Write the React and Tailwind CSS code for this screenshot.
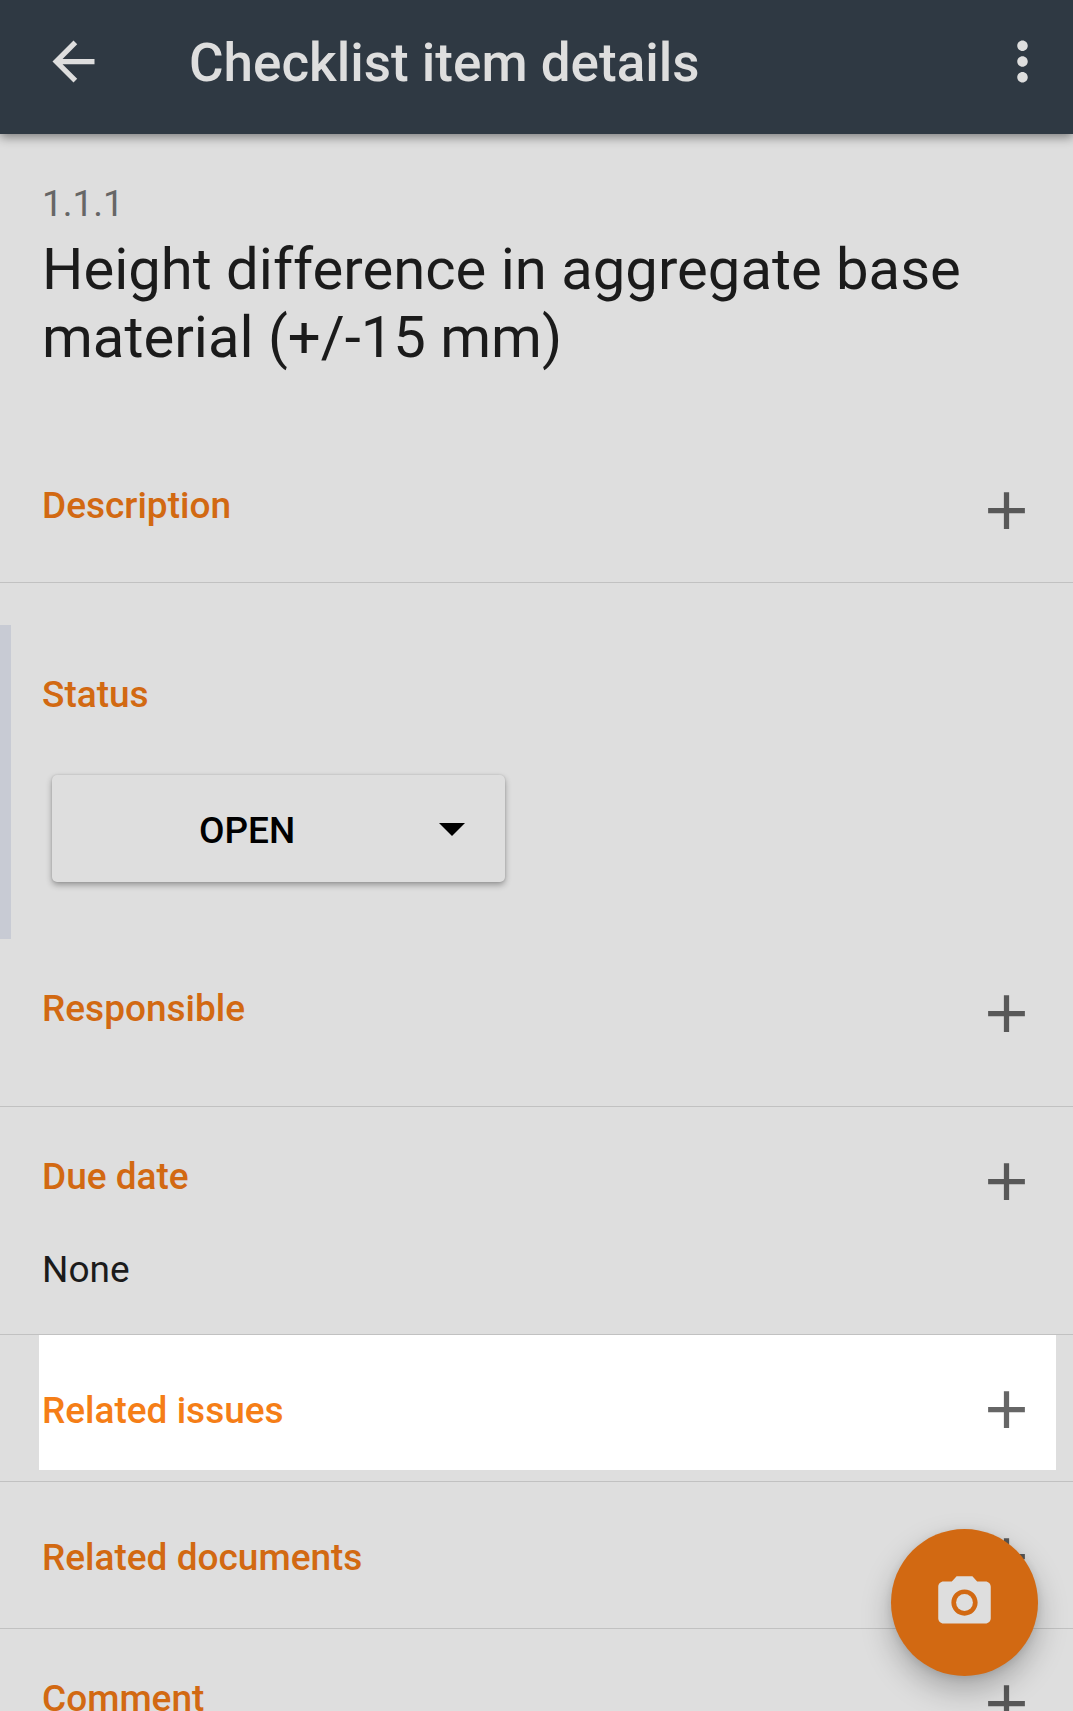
import { MdAdd, MdArrowBack, MdMoreVert, MdPhotoCamera } from "react-icons/md";

function SectionHeader({ title, low = false, bright = false }) {
  return (
    <div className="flex items-center justify-between">
      <h2
        className={`text-[37px] leading-[44px] font-medium ${low ? "pt-1" : "pb-2"} ${
          bright ? "text-[#f57e17]" : "text-[#d26912]"
        }`}
      >
        {title}
      </h2>
      <button
        type="button"
        aria-label={`Add ${title}`}
        className={`size-16 shrink-0 ${bright ? "text-[#666666]" : "text-[#585858]"}`}
      >
        <MdAdd className="size-[63px]" />
      </button>
    </div>
  );
}

export default function App() {
  return (
    <div className="relative flex h-screen flex-col overflow-hidden bg-[#dedede] font-[Roboto,sans-serif] text-[#1b1b1b]">
      <header className="z-10 flex h-[134px] shrink-0 items-center bg-[#2f3943] pr-[18px] pb-3 pl-[42px] text-[#dedede] shadow-[0_3px_10px_rgba(0,0,0,0.45)]">
        <button type="button" aria-label="Back" className="size-16 shrink-0">
          <MdArrowBack className="size-[63px]" />
        </button>
        <h1 className="ml-[83px] flex-1 pt-1 text-[53px] leading-[62px] font-medium">
          Checklist item details
        </h1>
        <button type="button" aria-label="More options" className="size-16 shrink-0">
          <MdMoreVert className="size-[63px]" />
        </button>
      </header>

      <main className="min-h-0 flex-1 overflow-y-auto [scrollbar-width:none]">
        <section className="border-b border-[#c1c1c1] pt-12 pr-[34px] pb-10 pl-[42px]">
          <p className="text-[37px] leading-[44px] text-[#666666]">1.1.1</p>
          <p className="mt-[9px] mb-[107px] text-[58px] leading-[68px]">
            Height difference in aggregate base material (+/-15 mm)
          </p>
          <SectionHeader title="Description" />
        </section>

        <section className="mt-[42px] border-l-[11px] border-[#c8cbd4] pt-12 pb-[57px] pl-[31px]">
          <label
            htmlFor="status"
            className="block text-[37px] leading-[44px] font-medium text-[#d26912]"
          >
            Status
          </label>
          <div className="relative mt-[58px] ml-[10px] w-[453px] max-w-full">
            <select
              id="status"
              defaultValue="OPEN"
              className="block h-[107px] w-full appearance-none rounded-[5px] bg-[#dedede] pt-1 pl-[147px] text-[37px] leading-[44px] font-medium text-black shadow-[0_3px_6px_rgba(0,0,0,0.32),0_0_2px_rgba(0,0,0,0.15)]"
            >
              <option>OPEN</option>
            </select>
            <svg
              viewBox="0 0 26 13"
              className="pointer-events-none absolute top-12 right-10 h-[13px] w-[26px]"
              aria-hidden="true"
            >
              <path d="M0 0h26L13 13z" />
            </svg>
          </div>
        </section>

        <section className="border-b border-[#c1c1c1] pt-[42px] pr-[34px] pb-[61px] pl-[42px]">
          <SectionHeader title="Responsible" />
        </section>

        <section className="border-b border-[#c1c1c1] pt-[42px] pr-[34px] pb-[42px] pl-[42px]">
          <SectionHeader title="Due date" />
          <p className="mt-[35px] text-[37px] leading-[44px]">None</p>
        </section>

        <section className="border-b border-[#c1c1c1] pr-[17px] pb-[11px] pl-[39px]">
          <div className="bg-white pt-[42px] pr-[17px] pb-[29px] pl-[3px]">
            <SectionHeader title="Related issues" low bright />
          </div>
        </section>

        <section className="border-b border-[#c1c1c1] pt-[42px] pr-[34px] pb-10 pl-[42px]">
          <SectionHeader title="Related documents" low />
        </section>

        <section className="pt-[42px] pr-[34px] pb-10 pl-[42px]">
          <SectionHeader title="Comment" />
        </section>
      </main>

      <button
        type="button"
        aria-label="Take photo"
        className="absolute right-[35px] bottom-[35px] z-10 flex size-[147px] items-center justify-center rounded-full bg-[#d26912] text-[#dedede] shadow-[0_14px_30px_rgba(0,0,0,0.25),0_2px_8px_rgba(0,0,0,0.1)]"
      >
        <MdPhotoCamera className="size-[63px]" />
      </button>
    </div>
  );
}
